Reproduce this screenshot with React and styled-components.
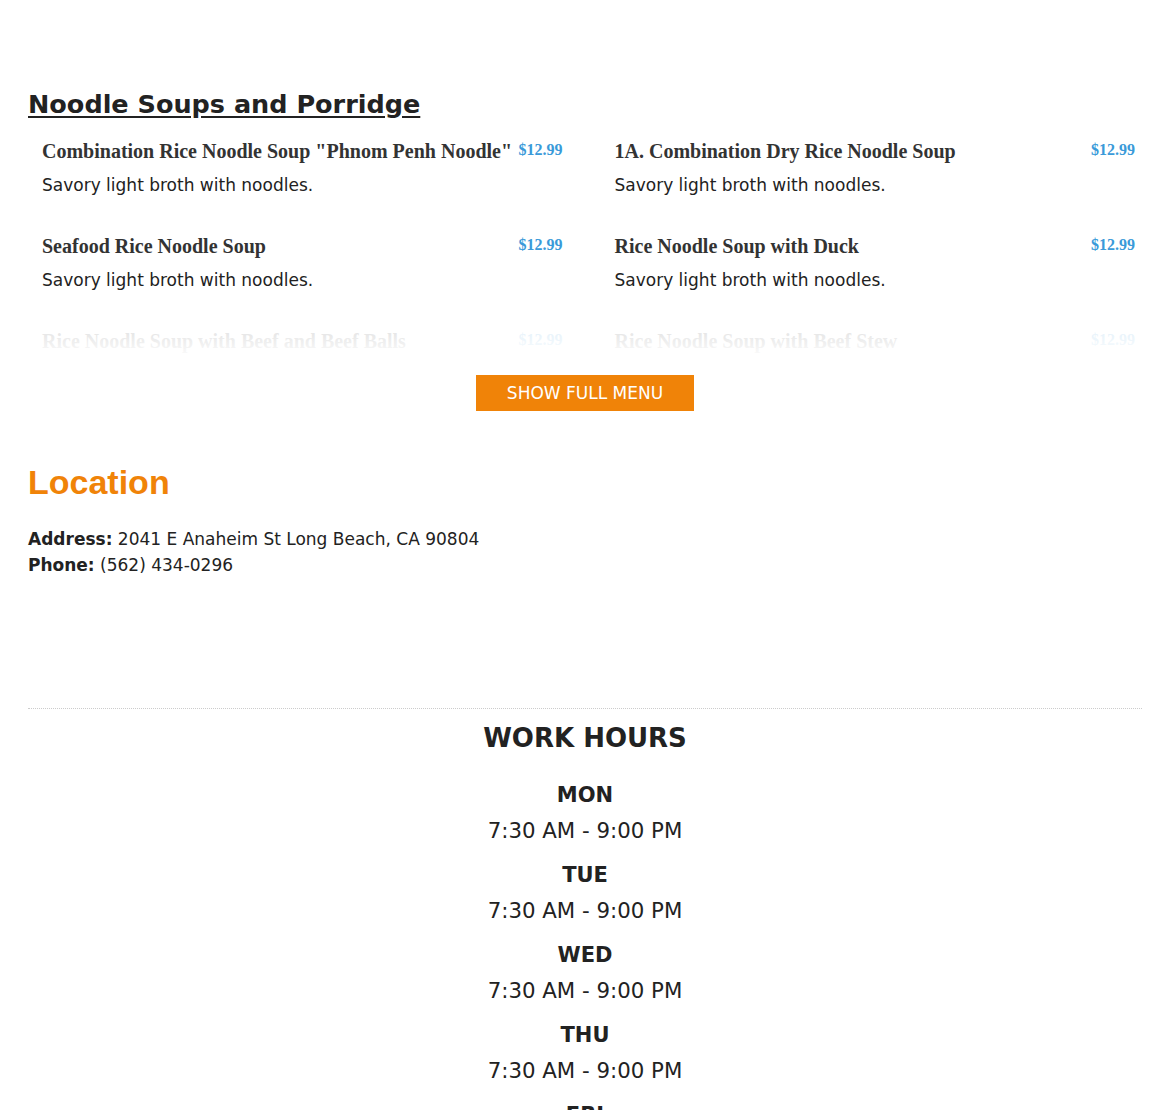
import React from 'react';
import styled, { createGlobalStyle } from 'styled-components';

const GlobalStyle = createGlobalStyle`
    body {
        margin: 0;
        background: #fff;
        font-family: "DejaVu Sans", Verdana, sans-serif;
        color: #222;
    }
`;

const Page = styled.div`
    padding: 0 28px;
`;

const MenuSection = styled.section`
    padding-top: 89px;
`;

const SectionTitle = styled.h2`
    margin: 0 0 20px;
    font-size: 25.5px;
    line-height: 30px;
    font-weight: bold;
    color: #222;
    text-decoration: underline;
    text-underline-offset: 3px;
`;

const MenuWrap = styled.div`
    position: relative;
    max-height: 221px;
    overflow: hidden;
`;

const Fade = styled.div`
    position: absolute;
    left: 0;
    right: 0;
    bottom: 0;
    height: 70px;
    background: linear-gradient(to bottom, rgba(255,255,255,0) 0%, rgba(255,255,255,0.88) 60%, #fff 100%);
`;

const MenuGrid = styled.div`
    display: grid;
    grid-template-columns: 1fr 1fr;
    column-gap: 52px;
    row-gap: 37px;
    padding: 0 7px 0 14px;
`;

const Item = styled.div`
    display: flex;
    flex-direction: column;
    gap: 10px;
`;

const ItemHead = styled.div`
    display: flex;
    justify-content: space-between;
    align-items: flex-start;
    gap: 6px;
`;

const ItemName = styled.h4`
    margin: 0;
    font-family: "Liberation Serif", "Times New Roman", serif;
    font-weight: bold;
    font-size: 20px;
    line-height: 24px;
    color: #333;
`;

const Price = styled.span`
    font-family: "Liberation Serif", "Times New Roman", serif;
    font-weight: bold;
    font-size: 16px;
    line-height: 22px;
    color: #3a9ad9;
    white-space: nowrap;
`;

const Desc = styled.p`
    margin: 0;
    font-size: 17px;
    line-height: 24px;
    color: #222;
`;

const ButtonRow = styled.div`
    display: flex;
    justify-content: center;
    margin-top: 15px;
`;

const FullMenuButton = styled.button`
    width: 218px;
    height: 36px;
    padding: 0;
    border: none;
    background: #f08308;
    color: #fff;
    font-family: "DejaVu Sans", sans-serif;
    font-size: 17px;
    line-height: 36px;
    cursor: pointer;
`;

const LocationSection = styled.section`
    margin-top: 51px;
`;

const LocationTitle = styled.h2`
    margin: 0 0 24px;
    font-family: "Liberation Sans", Arial, sans-serif;
    font-weight: bold;
    font-size: 34px;
    line-height: 40px;
    color: #f08308;
`;

const InfoLine = styled.div`
    font-size: 17px;
    line-height: 26px;
    color: #222;
    b { font-weight: bold; }
`;

const HoursSection = styled.section`
    margin-top: 130px;
    border-top: 1px dotted #ccc;
    padding-top: 14px;
    text-align: center;
`;

const HoursTitle = styled.h3`
    margin: 0 0 29px;
    font-size: 26px;
    line-height: 31px;
    font-weight: bold;
    color: #222;
`;

const Day = styled.div`
    margin-bottom: 20px;
`;

const DayName = styled.div`
    font-size: 21px;
    line-height: 25px;
    font-weight: bold;
    margin-bottom: 10px;
`;

const DayTime = styled.div`
    font-size: 21.3px;
    line-height: 25px;
`;

const items = [
    { name: 'Combination Rice Noodle Soup "Phnom Penh Noodle"', price: '$12.99' },
    { name: '1A. Combination Dry Rice Noodle Soup', price: '$12.99' },
    { name: 'Seafood Rice Noodle Soup', price: '$12.99' },
    { name: 'Rice Noodle Soup with Duck', price: '$12.99' },
    { name: 'Rice Noodle Soup with Beef and Beef Balls', price: '$12.99' },
    { name: 'Rice Noodle Soup with Beef Stew', price: '$12.99' },
];

const days = ['MON', 'TUE', 'WED', 'THU', 'FRI', 'SAT', 'SUN'];

export default function App() {
    return (
        <Page>
            <GlobalStyle />
            <MenuSection>
                <SectionTitle>Noodle Soups and Porridge</SectionTitle>
                <MenuWrap>
                    <MenuGrid>
                        {items.map((it) => (
                            <Item key={it.name}>
                                <ItemHead>
                                    <ItemName>{it.name}</ItemName>
                                    <Price>{it.price}</Price>
                                </ItemHead>
                                <Desc>Savory light broth with noodles.</Desc>
                            </Item>
                        ))}
                    </MenuGrid>
                    <Fade />
                </MenuWrap>
                <ButtonRow>
                    <FullMenuButton>SHOW FULL MENU</FullMenuButton>
                </ButtonRow>
            </MenuSection>

            <LocationSection>
                <LocationTitle>Location</LocationTitle>
                <InfoLine><b>Address:</b> 2041 E Anaheim St Long Beach, CA 90804</InfoLine>
                <InfoLine><b>Phone:</b> (562) 434-0296</InfoLine>
            </LocationSection>

            <HoursSection>
                <HoursTitle>WORK HOURS</HoursTitle>
                {days.map((d) => (
                    <Day key={d}>
                        <DayName>{d}</DayName>
                        <DayTime>7:30 AM - 9:00 PM</DayTime>
                    </Day>
                ))}
            </HoursSection>
        </Page>
    );
}
